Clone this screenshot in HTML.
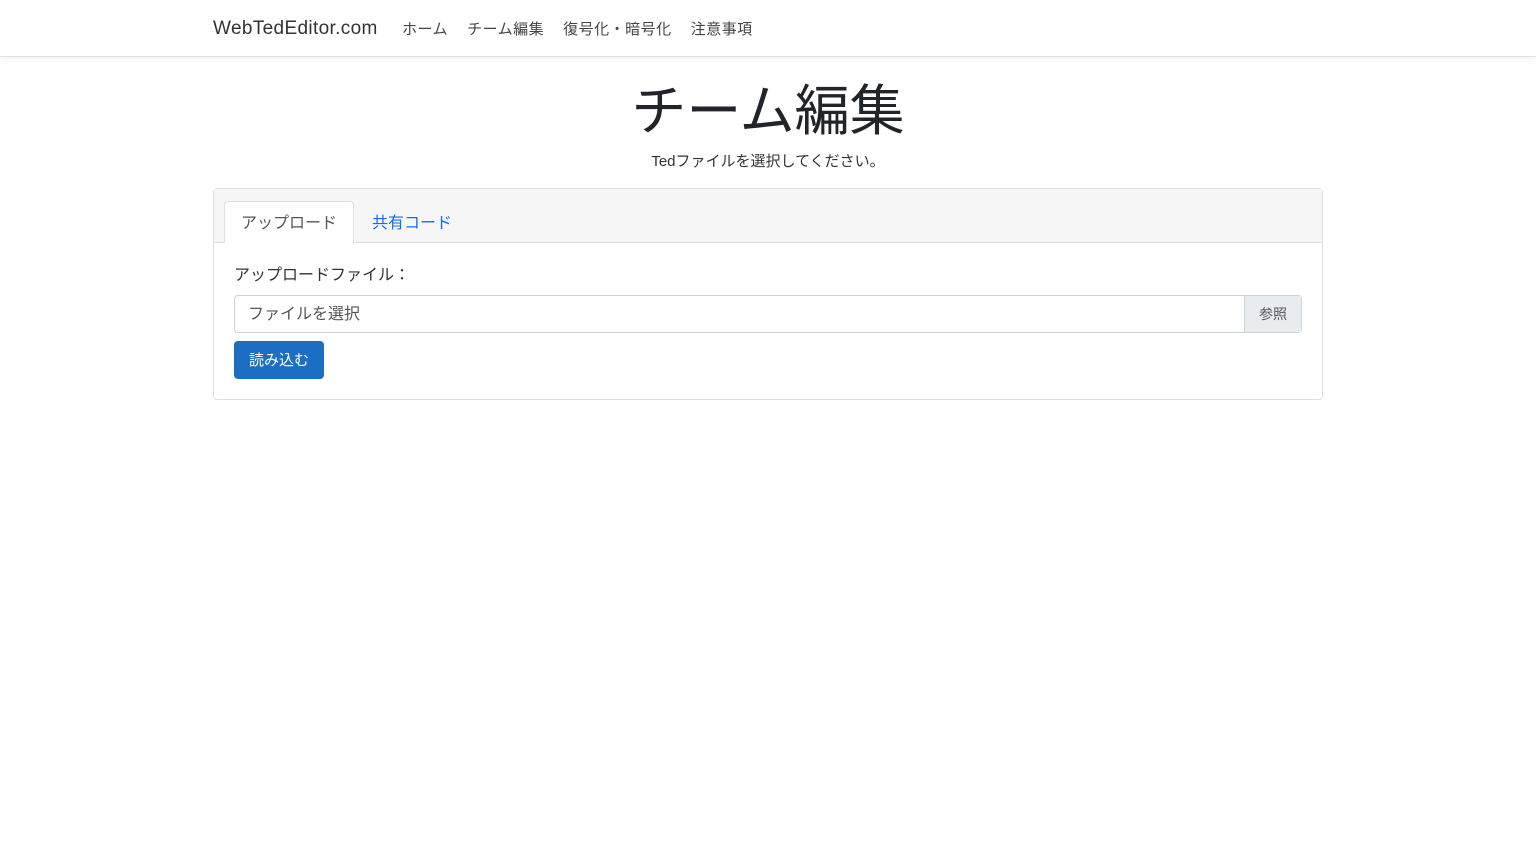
<!DOCTYPE html>
<html><head><meta charset="utf-8"><style>
*{box-sizing:border-box;margin:0;padding:0}
body{width:1536px;height:864px;background:#fff;font-family:"Liberation Sans","Noto Sans CJK JP",sans-serif;color:#212529;position:relative;overflow:hidden}
.nav{position:absolute;left:0;top:0;width:1536px;height:57px;border-bottom:1px solid #dee2e6;box-shadow:0 2px 6px rgba(0,0,0,.05)}
.brand{position:absolute;left:213px;top:18px;font-size:19px;color:#333;letter-spacing:0.35px}
.links{position:absolute;left:402px;top:18px;font-size:15px;color:#444;letter-spacing:0.5px}
.links span{margin-right:19px}
h1{position:absolute;left:0;width:1536px;top:66px;text-align:center;font-size:55px;font-weight:400;letter-spacing:0}
.sub{position:absolute;left:0;width:1536px;top:150px;text-align:center;font-size:15px;color:#333}
.card{position:absolute;left:213px;top:188px;width:1110px;height:212px;border:1px solid #dfdfdf;border-radius:4px}
.head{height:54px;background:#f6f6f6;border-bottom:1px solid #dfdfdf;position:relative}
.tab1{position:absolute;left:10px;top:12px;width:130px;height:42px;background:#fff;border:1px solid #dfdfdf;border-bottom:none;border-radius:4px 4px 0 0;text-align:center;line-height:43px;font-size:16px;color:#555}
.tab2{position:absolute;left:158px;top:13px;line-height:43px;font-size:16px;color:#0d6efd}
.lbl{position:absolute;left:20px;top:72px;font-size:16px;color:#333}
.inp{position:absolute;left:20px;top:106px;width:1068px;height:38px;border:1px solid #ced4da;border-radius:4px;font-size:16px;color:#555;line-height:38px;padding-left:13px}
.btnb{position:absolute;right:0;top:0;width:57px;height:36px;background:#e9ecef;border-left:1px solid #ced4da;text-align:center;font-size:14px;color:#555;line-height:36px}
.btn{position:absolute;left:20px;top:152px;width:90px;height:38px;background:#1b6ec2;border-radius:4px;color:#fff;font-size:15px;text-align:center;line-height:40px}
</style></head><body>
<div class="nav"><div class="brand">WebTedEditor.com</div><div class="links"><span>ホーム</span><span>チーム編集</span><span>復号化・暗号化</span><span>注意事項</span></div></div>
<h1>チーム編集</h1>
<div class="sub">Tedファイルを選択してください。</div>
<div class="card">
<div class="head"><div class="tab1">アップロード</div><div class="tab2">共有コード</div></div>
<div class="lbl">アップロードファイル：</div>
<div class="inp">ファイルを選択<div class="btnb">参照</div></div>
<div class="btn">読み込む</div>
</div>
</body></html>
